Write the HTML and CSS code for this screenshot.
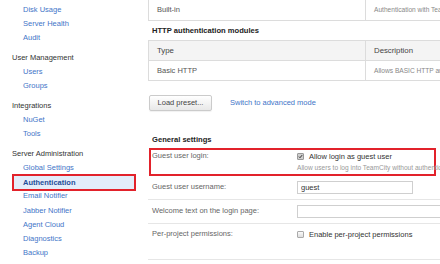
FILE: index.html
```html
<!DOCTYPE html>
<html lang="en">
<head>
    <meta charset="UTF-8">
    <title>Authentication - Administration</title>
    <link rel="stylesheet" href="styles.css">
</head>
<body>
<div class="page">

    <!-- left menu -->
    <nav class="sidebar">
        <div class="nav-group">
            <a href="#">Disk Usage</a>
            <a href="#">Server Health</a>
            <a href="#">Audit</a>
        </div>
        <div class="nav-group">
            <div class="nav-title">User Management</div>
            <a href="#">Users</a>
            <a href="#">Groups</a>
        </div>
        <div class="nav-group">
            <div class="nav-title">Integrations</div>
            <a href="#">NuGet</a>
            <a href="#">Tools</a>
        </div>
        <div class="nav-group">
            <div class="nav-title">Server Administration</div>
            <a href="#">Global Settings</a>
            <a href="#" class="active">Authentication</a>
            <a href="#">Email Notifier</a>
            <a href="#">Jabber Notifier</a>
            <a href="#">Agent Cloud</a>
            <a href="#">Diagnostics</a>
            <a href="#">Backup</a>
        </div>
    </nav>

    <!-- main -->
    <main class="content">
        <table class="grid grid-cut">
            <tr>
                <td class="col-type">Built-in</td>
                <td class="desc">Authentication with TeamCity built-in database</td>
            </tr>
        </table>

        <h3 class="section-title">HTTP authentication modules</h3>
        <table class="grid">
            <tr class="head">
                <th class="col-type">Type</th>
                <th>Description</th>
            </tr>
            <tr>
                <td class="col-type">Basic HTTP</td>
                <td class="desc">Allows BASIC HTTP authentication</td>
            </tr>
        </table>

        <div class="actions">
            <button class="btn">Load preset...</button>
            <a href="#" class="link">Switch to advanced mode</a>
        </div>

        <h3 class="section-title general">General settings</h3>
        <div class="settings">
            <div class="row row-marked">
                <div class="label">Guest user login:</div>
                <div class="value">
                    <label class="check-line"><span class="check checked"><svg viewBox="0 0 8 8" width="7" height="7"><path d="M1.5 4.2 L3.2 5.9 L6.6 1.8" fill="none" stroke="#222" stroke-width="1.5"/></svg></span>Allow login as guest user</label>
                    <div class="hint">Allow users to log into TeamCity without authentication</div>
                </div>
            </div>
            <div class="row">
                <div class="label">Guest user username:</div>
                <div class="value"><input type="text" class="field field-short" value="guest"></div>
            </div>
            <div class="row">
                <div class="label">Welcome text on the login page:</div>
                <div class="value"><input type="text" class="field field-long" value=""></div>
            </div>
            <div class="row row-tall">
                <div class="label">Per-project permissions:</div>
                <div class="value">
                    <label class="check-line"><span class="check"></span>Enable per-project permissions</label>
                </div>
            </div>
        </div>
    </main>
</div>
</body>
</html>
```

FILE: styles.css
```css
* {
    margin: 0;
    padding: 0;
    box-sizing: border-box;
}

body {
    font-family: "Liberation Sans", Arial, sans-serif;
    font-size: 7.5px;
    color: #444;
    background-color: #fff;
    overflow: hidden;
    width: 440px;
    height: 264px;
}

.page {
    display: flex;
    align-items: flex-start;
}

a {
    text-decoration: none;
}

/* left menu */
.sidebar {
    width: 148px;
    flex-shrink: 0;
    padding-top: 3px;
}

.nav-group + .nav-group {
    margin-top: 5.3px;
}

.nav-title {
    line-height: 14.2px;
    padding-left: 12px;
    color: #333;
}

.nav-group a {
    display: block;
    line-height: 14.2px;
    padding-left: 23px;
    color: #3f75c8;
}

.nav-group a.active {
    margin: -1.4px 12px -1.4px 12px;
    width: 124px;
    padding-left: 9px;
    line-height: 13px;
    border: 2px solid #e2222b;
    background-color: #e3edfa;
    color: #1f4d99;
    font-weight: bold;
}

/* main */
.content {
    width: 440px;
    flex-shrink: 0;
}

.grid {
    width: 430px;
    border-collapse: collapse;
    border: 1px solid #dcdcdc;
}

.grid-cut {
    border-top: none;
}

.grid td,
.grid th {
    height: 20px;
    padding: 0 8px;
    text-align: left;
    font-weight: normal;
    border: 1px solid #dcdcdc;
    color: #555;
    white-space: nowrap;
}

.grid-cut td {
    height: 20px;
    border-top: none;
}

.grid .col-type {
    width: 217px;
}

.grid .head th {
    background-color: #f4f4f4;
    color: #444;
    font-size: 7.8px;
}

.grid .desc {
    color: #888;
    font-size: 6.6px;
}

.section-title {
    font-size: 7.6px;
    font-weight: bold;
    color: #222;
    line-height: 19px;
    padding-left: 4px;
}

.section-title.general {
    margin-top: 20px;
    line-height: 17px;
}

.actions {
    display: flex;
    align-items: center;
    gap: 18px;
    margin-top: 14px;
    padding-left: 1px;
}

.btn {
    width: 63px;
    height: 16px;
    font-family: inherit;
    font-size: 7.5px;
    color: #444;
    border: 1px solid #cbcbcb;
    border-radius: 2px;
    background: linear-gradient(#ffffff, #e8e8e8);
    box-shadow: 0 1px 1px rgba(0, 0, 0, 0.06);
}

.link {
    color: #3f75c8;
}

/* settings form */
.settings {
    width: 440px;
}

.row {
    display: grid;
    grid-template-columns: 145px 1fr;
    align-items: center;
    height: 24px;
    padding-left: 4px;
    border-bottom: 1px solid #e6e6e6;
    color: #666;
}

.row-marked {
    align-items: start;
    width: 287px;
    height: 28px;
    margin-left: 1px;
    padding-left: 1px;
    border: 2px solid #e2222b;
}

.row-tall {
    align-items: start;
    height: 36px;
    padding-top: 4px;
}

.label {
    line-height: 12px;
    white-space: nowrap;
}

.value {
    white-space: nowrap;
}

.check-line {
    display: flex;
    align-items: center;
    gap: 5px;
    line-height: 13px;
    color: #333;
}

.check {
    display: inline-flex;
    align-items: center;
    justify-content: center;
    width: 7px;
    height: 7px;
    border: 1px solid #aaa;
    border-radius: 1px;
    background: linear-gradient(#fafafa, #dedede);
}

.check.checked {
    background: #cfcfcf;
    border-color: #999;
}

.check svg {
    display: block;
}

.hint {
    font-size: 6.6px;
    color: #999;
    line-height: 10px;
}

.field {
    display: block;
    height: 13px;
    padding: 0 3px;
    font-family: inherit;
    font-size: 7.5px;
    color: #333;
    border: 1px solid #cfcfcf;
    background-color: #fff;
    outline: none;
}

.field-short {
    width: 116px;
}

.field-long {
    width: 170px;
}
```
